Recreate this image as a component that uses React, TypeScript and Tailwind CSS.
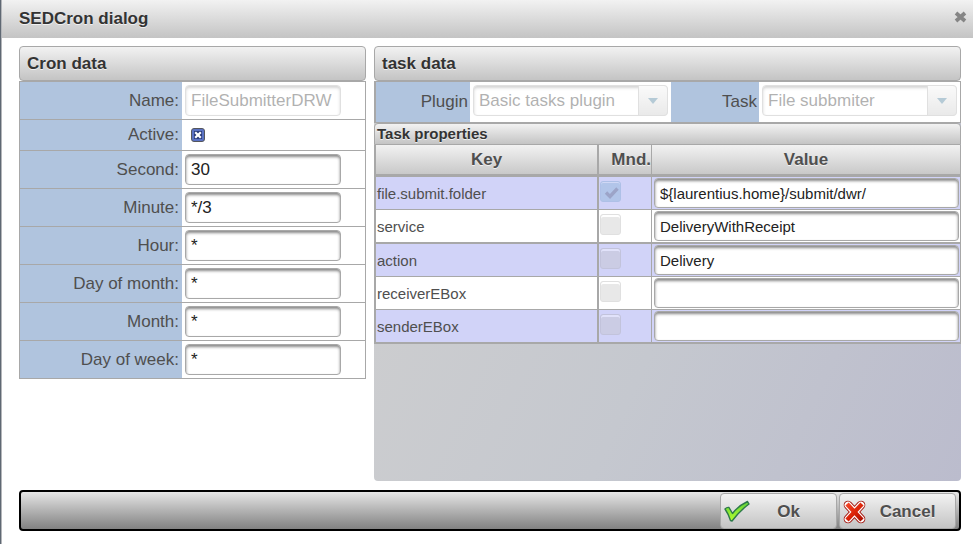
import React from "react";

const FONT = 'font-["Liberation_Sans",Arial,sans-serif]';
const raised = "bg-linear-to-b from-[#f2f2f2] to-[#c4c4c4]";
const emboss = "[text-shadow:0_1px_0_rgba(255,255,255,0.7)]";
const field =
  "block rounded-[4px] border border-[#a8a8a8] bg-white px-[5px] text-[#222222] outline-none shadow-[inset_0_2px_3px_#888888]";

const schedule = [
  { id: "second", label: "Second:", value: "30" },
  { id: "minute", label: "Minute:", value: "*/3" },
  { id: "hour", label: "Hour:", value: "*" },
  { id: "dom", label: "Day of month:", value: "*" },
  { id: "month", label: "Month:", value: "*" },
  { id: "dow", label: "Day of week:", value: "*" },
];

const properties = [
  { key: "file.submit.folder", mandatory: true, value: "${laurentius.home}/submit/dwr/", thick: false },
  { key: "service", mandatory: false, value: "DeliveryWithReceipt", thick: true },
  { key: "action", mandatory: false, value: "Delivery", thick: false },
  { key: "receiverEBox", mandatory: false, value: "", thick: false },
  { key: "senderEBox", mandatory: false, value: "", thick: true },
];

function PanelHeader({ children }: { children: React.ReactNode }) {
  return (
    <h2
      className={`h-[35px] rounded-[4px] border border-[#a8a8a8] px-[7px] text-[17px] leading-[33px] font-bold text-[#333333] ${raised} ${emboss}`}
    >
      {children}
    </h2>
  );
}

function FormRow({ id, label, children }: { id: string; label: string; children: React.ReactNode }) {
  return (
    <div className="flex border-b border-[#a8a8a8]">
      <label
        htmlFor={id}
        className="flex w-[162px] items-center justify-end bg-[#b0c4de] pr-[3px] text-[17px] leading-[20px] text-[#4f4f4f]"
      >
        {label}
      </label>
      <div className="flex-1 p-[3px]">{children}</div>
    </div>
  );
}

function SelectField({ id, label, value, labelClass }: { id: string; label: string; value: string; labelClass: string }) {
  return (
    <>
      <label
        htmlFor={id}
        className={`flex items-center justify-end bg-[#b0c4de] pr-[2px] text-[17px] leading-[20px] text-[#4f4f4f] ${labelClass}`}
      >
        {label}
      </label>
      <div className="min-w-0 flex-1 px-[3px] pt-[3px] pb-[6px]">
        <div className="relative h-[31px] rounded-[4px] opacity-35">
          <select
            id={id}
            disabled
            defaultValue={value}
            className="block h-[31px] w-full appearance-none rounded-[4px] border border-[#a8a8a8] bg-white pr-8 pl-[5px] text-[17px] text-[#222222] opacity-100 shadow-[inset_0_2px_3px_#888888]"
          >
            <option>{value}</option>
          </select>
          <span
            className={`pointer-events-none absolute inset-y-0 right-0 flex w-[30px] items-center justify-center rounded-r-[4px] border border-[#a8a8a8] ${raised}`}
          >
            <svg width="10" height="6" viewBox="0 0 10 6" aria-hidden="true">
              <path d="M0 0H10L5 6Z" fill="#2e6b8c" />
            </svg>
          </span>
        </div>
      </div>
    </>
  );
}

function MandatoryBox({ name, checked }: { name: string; checked: boolean }) {
  return (
    <span className="relative mt-[4px] ml-px block size-[21px] opacity-35">
      <input
        type="checkbox"
        disabled
        defaultChecked={checked}
        aria-label={`${name} mandatory`}
        className="block size-[21px] appearance-none rounded-[3px] border border-[#a8a8a8] bg-[#c0c0c0] shadow-[inset_0_2px_0_#ffffff] checked:border-[#6f9fc8] checked:bg-[#7aaed0] checked:shadow-[inset_0_1px_0_#cfe4f2]"
      />
      {checked && (
        <svg className="pointer-events-none absolute inset-0" width="21" height="21" viewBox="0 0 21 21" aria-hidden="true">
          <path d="M6 11.500L10 15.500L17.500 7.500" fill="none" stroke="#3c5070" strokeWidth="3.400" />
        </svg>
      )}
    </span>
  );
}

export default function App() {
  return (
    <div className={`flex border-l border-[#5f6873] bg-white ${FONT}`}>
      <main className="min-w-0 flex-1 border-l border-[#b4b6ba]">
        <header className={`flex h-[38px] items-center justify-between pr-[6px] pl-[17px] ${raised}`}>
          <h1 className={`text-[17px] leading-[20px] font-bold text-[#333333] ${emboss}`}>SEDCron dialog</h1>
          <button type="button" aria-label="Close" className="mb-[4px]">
            <svg width="13" height="12" viewBox="0 0 13 12" aria-hidden="true">
              <path d="M2 2L11 10M11 2L2 10" stroke="#858585" strokeWidth="3.800" />
            </svg>
          </button>
        </header>

        <div className="flex gap-2 pt-2 pr-3 pl-[17px]">
          <section className="w-[347px] shrink-0">
            <PanelHeader>Cron data</PanelHeader>
            <div className="border-x border-t border-[#a8a8a8]">
              <FormRow id="name" label="Name:">
                <input
                  id="name"
                  disabled
                  defaultValue="FileSubmitterDRW"
                  className={`h-[31px] w-[156px] text-[17px] opacity-35 ${field}`}
                />
              </FormRow>
              <FormRow id="active" label="Active:">
                <span className="relative my-[5px] ml-[6px] block size-[14px]">
                  <input
                    id="active"
                    type="checkbox"
                    defaultChecked
                    className="block size-[14px] appearance-none rounded-[3px] border border-[#55565c] bg-[#5a72c4]"
                  />
                  <svg className="pointer-events-none absolute inset-0" width="14" height="14" viewBox="0 0 14 14" aria-hidden="true">
                    <rect x="3" y="3" width="8" height="8" fill="#2b3d7c" />
                    <path d="M4.200 4.200L9.800 9.800M9.800 4.200L4.200 9.800" stroke="#ffffff" strokeWidth="2.200" />
                  </svg>
                </span>
              </FormRow>
              {schedule.map((row) => (
                <FormRow key={row.id} id={row.id} label={row.label}>
                  <input id={row.id} defaultValue={row.value} className={`h-[31px] w-[156px] text-[17px] ${field}`} />
                </FormRow>
              ))}
            </div>
          </section>

          <section className="flex min-w-0 flex-1 flex-col">
            <PanelHeader>task data</PanelHeader>
            <div className="flex flex-1 flex-col rounded-b-[4px] bg-linear-115 from-[#cfcfcf] via-[#c5c8cf] via-52% to-[#bbbccd]">
              <div className="flex border-y border-r border-l-2 border-[#a8a8a8] bg-white">
                <SelectField id="plugin" label="Plugin" value="Basic tasks plugin" labelClass="w-[94px]" />
                <SelectField id="task" label="Task" value="File subbmiter" labelClass="w-[88px]" />
              </div>
              <h3
                className={`h-[22px] rounded-t-[4px] border border-[#a8a8a8] pl-[2px] text-[15px] leading-[20px] font-bold text-[#333333] ${raised} ${emboss}`}
              >
                Task properties
              </h3>
              <table className="w-full table-fixed border-separate border-spacing-0 border-r border-l-2 border-[#a8a8a8]">
                <colgroup>
                  <col className="w-[223px]" />
                  <col className="w-[53px]" />
                  <col />
                </colgroup>
                <thead>
                  <tr className={`h-[32px] text-[17px] leading-[20px] text-[#4f4f4f] ${raised} ${emboss}`}>
                    <th className="border-r-2 border-b-3 border-[#a8a8a8] p-0">Key</th>
                    <th className="border-r border-b-3 border-[#a8a8a8] p-0 text-right">Mnd.</th>
                    <th className="border-b-3 border-[#a8a8a8] p-0">Value</th>
                  </tr>
                </thead>
                <tbody>
                  {properties.map((row) => {
                    const line = row.thick ? "border-b-2 h-[34px]" : "border-b h-[33px]";
                    return (
                      <tr key={row.key} className="bg-white text-[15px] leading-[18px] odd:bg-[#d1d3f8]">
                        <td className={`border-r-2 border-[#a8a8a8] pt-px pr-0 pb-0 pl-px text-[#4f4f4f] ${line}`}>{row.key}</td>
                        <td className={`border-r border-[#a8a8a8] p-0 align-top ${line}`}>
                          <MandatoryBox name={row.key} checked={row.mandatory} />
                        </td>
                        <td className={`border-[#a8a8a8] py-0 pr-px pl-[2px] ${line}`}>
                          <input
                            aria-label={row.key}
                            defaultValue={row.value}
                            className={`h-[30px] w-full text-[15px] ${field}`}
                          />
                        </td>
                      </tr>
                    );
                  })}
                </tbody>
              </table>
              <div className="h-[137px]" />
            </div>
          </section>
        </div>

        <footer className="mt-[9px] mr-3 mb-[13px] ml-[17px] flex h-[41px] justify-end gap-[2px] rounded-[4px] border-2 border-black bg-linear-to-b from-[#e6e6e6] to-[#828282] pt-px pr-[3px]">
          <button
            type="button"
            className={`flex w-[117px] items-center rounded-[4px] border border-[#a8a8a8] pt-[2px] pl-[3px] text-[17px] font-bold text-[#4f4f4f] ${raised} ${emboss}`}
          >
            <svg width="26" height="24" viewBox="0 0 26 24" aria-hidden="true">
              <defs>
                <linearGradient id="tick" x1="0" y1="0" x2="0" y2="1">
                  <stop offset="0" stopColor="#5fd23a" />
                  <stop offset="1" stopColor="#b4ff2e" />
                </linearGradient>
              </defs>
              <path
                d="M1 9Q3 7 5 7.500L8.500 13.500Q14 6 23.500 1.500L25 4Q15 11.500 8 21L6.500 20.500Q4.500 14 1 9Z"
                fill="url(#tick)"
                stroke="#2d7a4a"
                strokeWidth="1.400"
                strokeLinejoin="round"
              />
            </svg>
            <span className="flex-1 pr-[9px] text-center">Ok</span>
          </button>
          <button
            type="button"
            className={`flex w-[117px] items-center rounded-[4px] border border-[#a8a8a8] pt-[2px] pl-[3px] text-[17px] font-bold text-[#4f4f4f] ${raised} ${emboss}`}
          >
            <svg width="26" height="26" viewBox="0 0 26 26" aria-hidden="true">
              <defs>
                <linearGradient id="cross" gradientUnits="userSpaceOnUse" x1="4" y1="4" x2="20" y2="22">
                  <stop offset="0" stopColor="#f4472a" />
                  <stop offset="0.500" stopColor="#dc2408" />
                  <stop offset="1" stopColor="#a80c00" />
                </linearGradient>
              </defs>
              <g fill="none" strokeLinecap="round">
                <path d="M5 6L18 20M18 6L5 20" stroke="#a51a12" strokeWidth="8.600" />
                <path d="M5 6L18 20M18 6L5 20" stroke="#ffffff" strokeWidth="6.800" />
                <path d="M5.500 6.500L17.500 19.500M17.500 6.500L5.500 19.500" stroke="url(#cross)" strokeWidth="4.400" strokeLinecap="square" />
              </g>
            </svg>
            <span className="flex-1 pr-[9px] text-center">Cancel</span>
          </button>
        </footer>
      </main>
    </div>
  );
}
